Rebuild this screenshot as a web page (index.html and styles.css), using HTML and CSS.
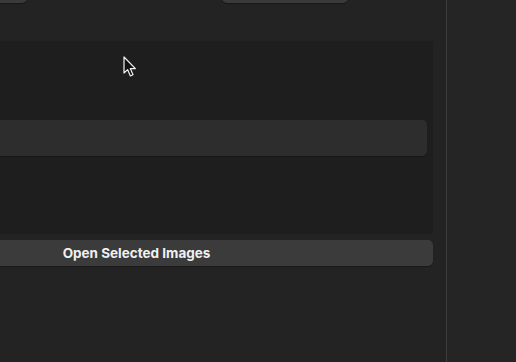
FILE: index.html
```html
<!DOCTYPE html>
<html lang="en">
<head>
    <meta charset="UTF-8">
    <title>Open Images</title>
    <link rel="stylesheet" href="styles.css">
</head>
<body>

<div class="window">
    <div class="main">
        <div class="top-bar">
            <div class="tab tab-left"></div>
            <div class="tab tab-right"></div>
        </div>
        <div class="content">
            <div class="panel">
                <div class="field"></div>
            </div>
            <button class="open-btn">Open Selected Images</button>
        </div>
    </div>
    <div class="divider"></div>
    <div class="side"></div>
</div>

<svg class="cursor" width="14" height="22" viewBox="0 0 14 22">
    <path d="M1 1 L1 17 L4.6 13.6 L7.4 20 L10 18.8 L7.3 12.6 L12.4 12.6 Z" fill="#111" stroke="#f2f2f2" stroke-width="1.2" stroke-linejoin="round"/>
</svg>

</body>
</html>
```

FILE: styles.css
```css
/* Base */
body {
    margin: 0;
    background-color: #232323;
    font-family: Inter, "Noto Sans", sans-serif;
    overflow: hidden;
}

.window {
    display: flex;
    height: 362px;
}

/* Main column */
.main {
    width: 446px;
    overflow: hidden;
}

.top-bar {
    position: relative;
    height: 41px;
}

.tab {
    position: absolute;
    top: -10px;
    height: 13px;
    background-color: #3a3a3a;
    border-radius: 0 0 5px 5px;
    box-shadow: 0 1px 1px rgba(0, 0, 0, 0.35);
}

.tab-left {
    left: -40px;
    width: 67px;
}

.tab-right {
    left: 222px;
    width: 126px;
}

.content {
    margin-left: -160px;
    width: 593px;
}

.panel {
    background-color: #1e1e1e;
    height: 193px;
    padding-top: 79px;
    padding-right: 6px;
    box-sizing: border-box;
}

.field {
    height: 36px;
    background-color: #2d2d2d;
    border-radius: 5px;
    box-shadow: 0 1px 1px rgba(0, 0, 0, 0.25);
}

.open-btn {
    display: block;
    width: 100%;
    height: 26px;
    margin-top: 6px;
    border: none;
    border-radius: 5px;
    background-color: #3b3b3b;
    color: #f0f0f0;
    font-family: Inter, "Noto Sans", sans-serif;
    font-size: 13.5px;
    font-weight: 700;
    padding: 0;
    box-shadow: 0 1px 1px rgba(0, 0, 0, 0.3);
}

/* Side region */
.divider {
    width: 1px;
    background-color: #3c3c3c;
}

.side {
    flex: 1;
    background-color: #252525;
}

/* Mouse pointer */
.cursor {
    position: absolute;
    left: 123px;
    top: 56px;
}
```
